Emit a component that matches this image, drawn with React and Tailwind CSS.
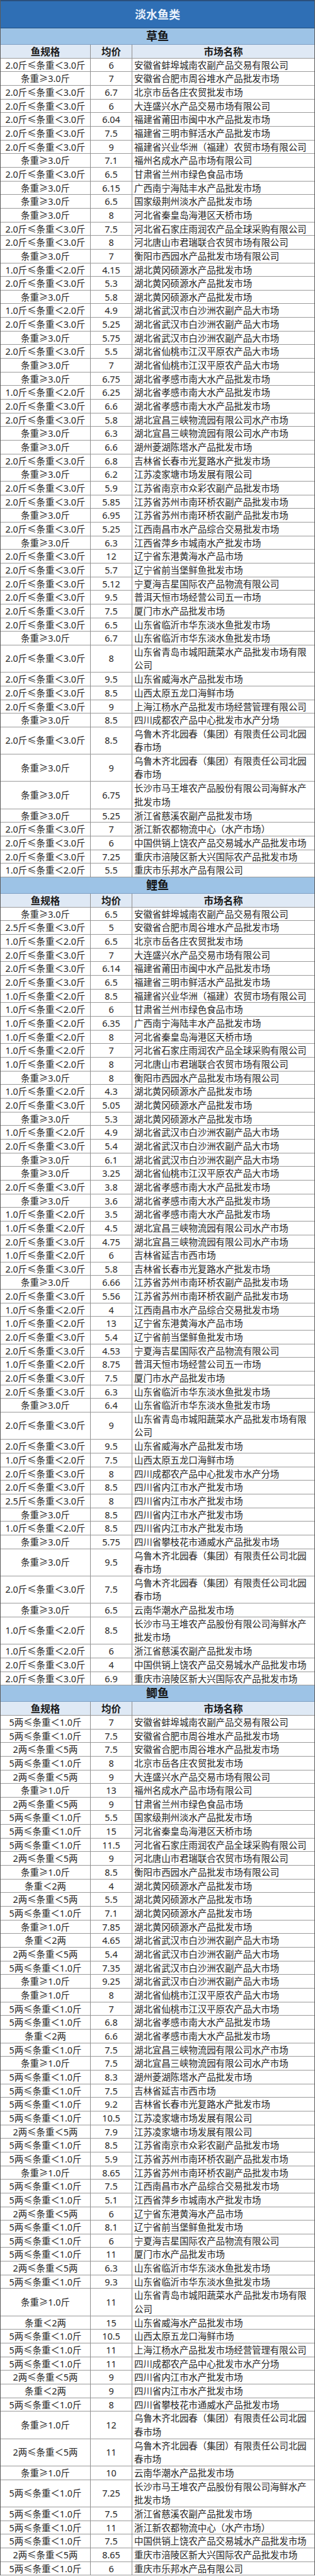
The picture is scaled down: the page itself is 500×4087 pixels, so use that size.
const SPEC = {
  a: "2.0斤≤条重＜3.0斤",
  b: "条重≥3.0斤",
  c: "1.0斤≤条重＜2.0斤",
  d: "2.5斤≤条重＜3.0斤",
  e: "5两≤条重＜1.0斤",
  f: "2两≤条重＜5两",
  g: "条重≥1.0斤",
  h: "条重＜2两",
};

const caoyu = [
  ["a", "6", "安徽省蚌埠城南农副产品交易有限公司"],
  ["b", "7", "安徽省合肥市周谷堆水产品批发市场"],
  ["a", "6.7", "北京市岳各庄农贸批发市场"],
  ["a", "6", "大连盛兴水产品交易市场有限公司"],
  ["a", "6.04", "福建省莆田市闽中水产品批发市场"],
  ["a", "7.5", "福建省三明市鲜活水产品批发市场"],
  ["a", "9", "福建省兴业华洲（福建）农贸市场有限公司"],
  ["b", "7.1", "福州名成水产品市场有限公司"],
  ["a", "6.5", "甘肃省兰州市绿色食品市场"],
  ["b", "6.15", "广西南宁海陆丰水产品批发市场"],
  ["b", "6.5", "国家级荆州淡水产品批发市场"],
  ["b", "8", "河北省秦皇岛海港区天桥市场"],
  ["a", "7.5", "河北省石家庄雨润农产品全球采购有限公司"],
  ["a", "8", "河北唐山市君瑞联合农贸市场有限公司"],
  ["b", "7", "衡阳市西园水产品批发市场有限公司"],
  ["c", "4.15", "湖北黄冈硕源水产品批发市场"],
  ["a", "5.3", "湖北黄冈硕源水产品批发市场"],
  ["b", "5.8", "湖北黄冈硕源水产品批发市场"],
  ["c", "4.9", "湖北省武汉市白沙洲农副产品大市场"],
  ["a", "5.25", "湖北省武汉市白沙洲农副产品大市场"],
  ["b", "5.75", "湖北省武汉市白沙洲农副产品大市场"],
  ["a", "5.5", "湖北省仙桃市江汉平原农产品大市场"],
  ["b", "7", "湖北省仙桃市江汉平原农产品大市场"],
  ["b", "6.75", "湖北省孝感市南大水产品批发市场"],
  ["c", "6.25", "湖北省孝感市南大水产品批发市场"],
  ["a", "6.6", "湖北省孝感市南大水产品批发市场"],
  ["a", "5.8", "湖北宜昌三峡物流园有限公司水产市场"],
  ["b", "6.3", "湖北宜昌三峡物流园有限公司水产市场"],
  ["b", "6.6", "湖州菱湖陈塔水产品批发市场"],
  ["a", "6.8", "吉林省长春市光复路水产批发市场"],
  ["b", "6.2", "江苏凌家塘市场发展有限公司"],
  ["a", "5.9", "江苏省南京市众彩农副产品批发市场"],
  ["a", "5.85", "江苏省苏州市南环桥农副产品批发市场"],
  ["b", "6.95", "江苏省苏州市南环桥农副产品批发市场"],
  ["a", "5.25", "江西南昌市水产品综合交易批发市场"],
  ["b", "6.3", "江西省萍乡市城南水产批发市场"],
  ["a", "12", "辽宁省东港黄海水产品市场"],
  ["a", "5.7", "辽宁省前当堡鲜鱼批发市场"],
  ["a", "5.12", "宁夏海吉星国际农产品物流有限公司"],
  ["a", "9.5", "普洱天恒市场经营公司五一市场"],
  ["a", "7.5", "厦门市水产品批发市场"],
  ["a", "6.5", "山东省临沂市华东淡水鱼批发市场"],
  ["b", "6.7", "山东省临沂市华东淡水鱼批发市场"],
  ["a", "8", "山东省青岛市城阳蔬菜水产品批发市场有限公司"],
  ["a", "9.5", "山东省威海水产品批发市场"],
  ["a", "8.5", "山西太原五龙口海鲜市场"],
  ["a", "9", "上海江杨水产品批发市场经营管理有限公司"],
  ["b", "8.5", "四川成都农产品中心批发市水产分场"],
  ["a", "8.5", "乌鲁木齐北园春（集团）有限责任公司北园春市场"],
  ["b", "9", "乌鲁木齐北园春（集团）有限责任公司北园春市场"],
  ["b", "6.75", "长沙市马王堆农产品股份有限公司海鲜水产批发市场"],
  ["b", "5.25", "浙江省慈溪农副产品批发市场"],
  ["a", "7", "浙江新农都物流中心（水产市场）"],
  ["a", "6", "中国供销上饶农产品交易城水产品批发市场"],
  ["a", "7.25", "重庆市涪陵区新大兴国际农产品批发市场"],
  ["c", "5.5", "重庆市乐邦水产品有限公司"],
];

const liyu = [
  ["b", "6.5", "安徽省蚌埠城南农副产品交易有限公司"],
  ["d", "5", "安徽省合肥市周谷堆水产品批发市场"],
  ["c", "6.5", "北京市岳各庄农贸批发市场"],
  ["a", "7", "大连盛兴水产品交易市场有限公司"],
  ["a", "6.14", "福建省莆田市闽中水产品批发市场"],
  ["a", "6.5", "福建省三明市鲜活水产品批发市场"],
  ["c", "8.5", "福建省兴业华洲（福建）农贸市场有限公司"],
  ["c", "6", "甘肃省兰州市绿色食品市场"],
  ["c", "6.35", "广西南宁海陆丰水产品批发市场"],
  ["c", "8", "河北省秦皇岛海港区天桥市场"],
  ["c", "7", "河北省石家庄雨润农产品全球采购有限公司"],
  ["c", "8", "河北唐山市君瑞联合农贸市场有限公司"],
  ["b", "8", "衡阳市西园水产品批发市场有限公司"],
  ["c", "4.3", "湖北黄冈硕源水产品批发市场"],
  ["a", "5.05", "湖北黄冈硕源水产品批发市场"],
  ["b", "5.3", "湖北黄冈硕源水产品批发市场"],
  ["c", "4.9", "湖北省武汉市白沙洲农副产品大市场"],
  ["a", "5.4", "湖北省武汉市白沙洲农副产品大市场"],
  ["b", "6.1", "湖北省武汉市白沙洲农副产品大市场"],
  ["b", "3.25", "湖北省仙桃市江汉平原农产品大市场"],
  ["a", "3.8", "湖北省孝感市南大水产品批发市场"],
  ["b", "3.6", "湖北省孝感市南大水产品批发市场"],
  ["c", "3.5", "湖北省孝感市南大水产品批发市场"],
  ["c", "4.5", "湖北宜昌三峡物流园有限公司水产市场"],
  ["a", "4.75", "湖北宜昌三峡物流园有限公司水产市场"],
  ["c", "6", "吉林省延吉市西市场"],
  ["a", "5.8", "吉林省长春市光复路水产批发市场"],
  ["b", "6.66", "江苏省苏州市南环桥农副产品批发市场"],
  ["a", "5.56", "江苏省苏州市南环桥农副产品批发市场"],
  ["c", "4", "江西南昌市水产品综合交易批发市场"],
  ["c", "13", "辽宁省东港黄海水产品市场"],
  ["a", "5.4", "辽宁省前当堡鲜鱼批发市场"],
  ["a", "4.53", "宁夏海吉星国际农产品物流有限公司"],
  ["c", "8.75", "普洱天恒市场经营公司五一市场"],
  ["a", "7.5", "厦门市水产品批发市场"],
  ["a", "6.3", "山东省临沂市华东淡水鱼批发市场"],
  ["b", "6.4", "山东省临沂市华东淡水鱼批发市场"],
  ["a", "9", "山东省青岛市城阳蔬菜水产品批发市场有限公司"],
  ["a", "9.5", "山东省威海水产品批发市场"],
  ["c", "7.5", "山西太原五龙口海鲜市场"],
  ["a", "8", "四川成都农产品中心批发市水产分场"],
  ["a", "8.5", "四川省内江市水产批发市场"],
  ["d", "8", "四川省内江市水产批发市场"],
  ["b", "8.5", "四川省内江市水产批发市场"],
  ["c", "8.5", "四川省内江市水产批发市场"],
  ["b", "5.75", "四川省攀枝花市通威水产品批发市场"],
  ["b", "9.5", "乌鲁木齐北园春（集团）有限责任公司北园春市场"],
  ["a", "7.5", "乌鲁木齐北园春（集团）有限责任公司北园春市场"],
  ["b", "6.5", "云南华潮水产品批发市场"],
  ["c", "8.5", "长沙市马王堆农产品股份有限公司海鲜水产批发市场"],
  ["c", "6", "浙江省慈溪农副产品批发市场"],
  ["a", "4", "中国供销上饶农产品交易城水产品批发市场"],
  ["a", "6.9", "重庆市涪陵区新大兴国际农产品批发市场"],
];

const jiyu = [
  ["e", "7", "安徽省蚌埠城南农副产品交易有限公司"],
  ["e", "7.5", "安徽省合肥市周谷堆水产品批发市场"],
  ["f", "7.5", "安徽省合肥市周谷堆水产品批发市场"],
  ["e", "8", "北京市岳各庄农贸批发市场"],
  ["f", "9", "大连盛兴水产品交易市场有限公司"],
  ["g", "13", "福州名成水产品市场有限公司"],
  ["f", "9", "甘肃省兰州市绿色食品市场"],
  ["e", "5.5", "国家级荆州淡水产品批发市场"],
  ["e", "15", "河北省秦皇岛海港区天桥市场"],
  ["e", "11.5", "河北省石家庄雨润农产品全球采购有限公司"],
  ["f", "9", "河北唐山市君瑞联合农贸市场有限公司"],
  ["g", "8.5", "衡阳市西园水产品批发市场有限公司"],
  ["h", "4", "湖北黄冈硕源水产品批发市场"],
  ["f", "5.5", "湖北黄冈硕源水产品批发市场"],
  ["e", "7.1", "湖北黄冈硕源水产品批发市场"],
  ["g", "7.85", "湖北黄冈硕源水产品批发市场"],
  ["h", "4.65", "湖北省武汉市白沙洲农副产品大市场"],
  ["f", "5.4", "湖北省武汉市白沙洲农副产品大市场"],
  ["e", "7.35", "湖北省武汉市白沙洲农副产品大市场"],
  ["g", "9.25", "湖北省武汉市白沙洲农副产品大市场"],
  ["g", "8", "湖北省仙桃市江汉平原农产品大市场"],
  ["e", "7", "湖北省仙桃市江汉平原农产品大市场"],
  ["e", "6.8", "湖北省孝感市南大水产品批发市场"],
  ["h", "6.6", "湖北省孝感市南大水产品批发市场"],
  ["e", "7.5", "湖北宜昌三峡物流园有限公司水产市场"],
  ["g", "7.5", "湖北宜昌三峡物流园有限公司水产市场"],
  ["e", "8.3", "湖州菱湖陈塔水产品批发市场"],
  ["e", "7.5", "吉林省延吉市西市场"],
  ["e", "9.2", "吉林省长春市光复路水产批发市场"],
  ["e", "10.5", "江苏凌家塘市场发展有限公司"],
  ["f", "7.9", "江苏凌家塘市场发展有限公司"],
  ["e", "8.5", "江苏省南京市众彩农副产品批发市场"],
  ["e", "5.9", "江苏省苏州市南环桥农副产品批发市场"],
  ["g", "8.65", "江苏省苏州市南环桥农副产品批发市场"],
  ["e", "7.5", "江西南昌市水产品综合交易批发市场"],
  ["e", "5.1", "江西省萍乡市城南水产批发市场"],
  ["f", "6", "辽宁省东港黄海水产品市场"],
  ["e", "8.1", "辽宁省前当堡鲜鱼批发市场"],
  ["e", "6", "宁夏海吉星国际农产品物流有限公司"],
  ["e", "11", "厦门市水产品批发市场"],
  ["f", "6.3", "山东省临沂市华东淡水鱼批发市场"],
  ["e", "9.3", "山东省临沂市华东淡水鱼批发市场"],
  ["g", "11", "山东省青岛市城阳蔬菜水产品批发市场有限公司"],
  ["h", "15", "山东省威海水产品批发市场"],
  ["e", "10.5", "山西太原五龙口海鲜市场"],
  ["e", "11", "上海江杨水产品批发市场经营管理有限公司"],
  ["e", "11", "四川成都农产品中心批发市水产分场"],
  ["f", "9", "四川省内江市水产批发市场"],
  ["h", "9", "四川省内江市水产批发市场"],
  ["e", "8", "四川省攀枝花市通威水产品批发市场"],
  ["g", "12", "乌鲁木齐北园春（集团）有限责任公司北园春市场"],
  ["f", "11", "乌鲁木齐北园春（集团）有限责任公司北园春市场"],
  ["g", "10", "云南华潮水产品批发市场"],
  ["e", "7.25", "长沙市马王堆农产品股份有限公司海鲜水产批发市场"],
  ["e", "7.5", "浙江省慈溪农副产品批发市场"],
  ["e", "11", "浙江新农都物流中心（水产市场）"],
  ["e", "7.5", "中国供销上饶农产品交易城水产品批发市场"],
  ["f", "8.65", "重庆市涪陵区新大兴国际农产品批发市场"],
  ["e", "6", "重庆市乐邦水产品有限公司"],
];

const sections = [
  { title: "草鱼", rows: caoyu },
  { title: "鲤鱼", rows: liyu },
  { title: "鲫鱼", rows: jiyu },
];

const Row = ({ spec, price, name }) => {
  const tall = name.length > 19;
  return (
    <div
      className={`grid grid-cols-[143px_66px_1fr] border-b border-[#9b9b9b] bg-white text-[14.4px] text-[#262626] ${
        tall ? "h-[43.33px]" : "h-[21.67px]"
      }`}
    >
      <div className="flex items-center justify-center border-r border-[#8f8f8f]">
        {SPEC[spec]}
      </div>
      <div className="flex items-center justify-center border-r border-[#8f8f8f]">
        {price}
      </div>
      {tall ? (
        <div className="pl-[3px] pr-[8px] leading-[21.2px]">{name}</div>
      ) : (
        <div className="flex items-center pl-[3px] pr-[8px] whitespace-nowrap">
          {name}
        </div>
      )}
    </div>
  );
};

const Section = ({ title, rows }) => {
  return (
    <div>
      {/* FISH NAME */}
      <div className="flex h-[26px] items-center justify-center border-b border-[#7d9fc4] bg-[#9dc3e6] text-[18px] font-bold text-[#151515]">
        {title}
      </div>
      {/* COLUMN HEADER */}
      <div className="grid h-[21.67px] grid-cols-[143px_66px_1fr] border-b border-[#9b9b9b] bg-[#dfe9f5] text-[15.5px] font-bold text-[#1a1a1a]">
        <div className="flex items-center justify-center border-r border-[#8f8f8f]">
          鱼规格
        </div>
        <div className="flex items-center justify-center border-r border-[#8f8f8f]">
          均价
        </div>
        <div className="flex items-center justify-center">市场名称</div>
      </div>
      {rows.map((r, i) => (
        <Row key={i} spec={r[0]} price={r[1]} name={r[2]} />
      ))}
    </div>
  );
};

export default function App() {
  return (
    <div
      className="w-[500px] border-x border-[#5a5a5a] bg-white"
      style={{ fontFamily: '"Noto Sans", "Noto Sans CJK SC", sans-serif' }}
    >
      <div className="flex h-[45px] items-center justify-center border-t-2 border-b border-t-[#2a4f7c] border-b-[#24507f] bg-[#2f6fb5] text-[18px] font-bold text-[#e9f1fb]">
        淡水鱼类
      </div>
      {sections.map((s) => (
        <Section key={s.title} title={s.title} rows={s.rows} />
      ))}
    </div>
  );
}
